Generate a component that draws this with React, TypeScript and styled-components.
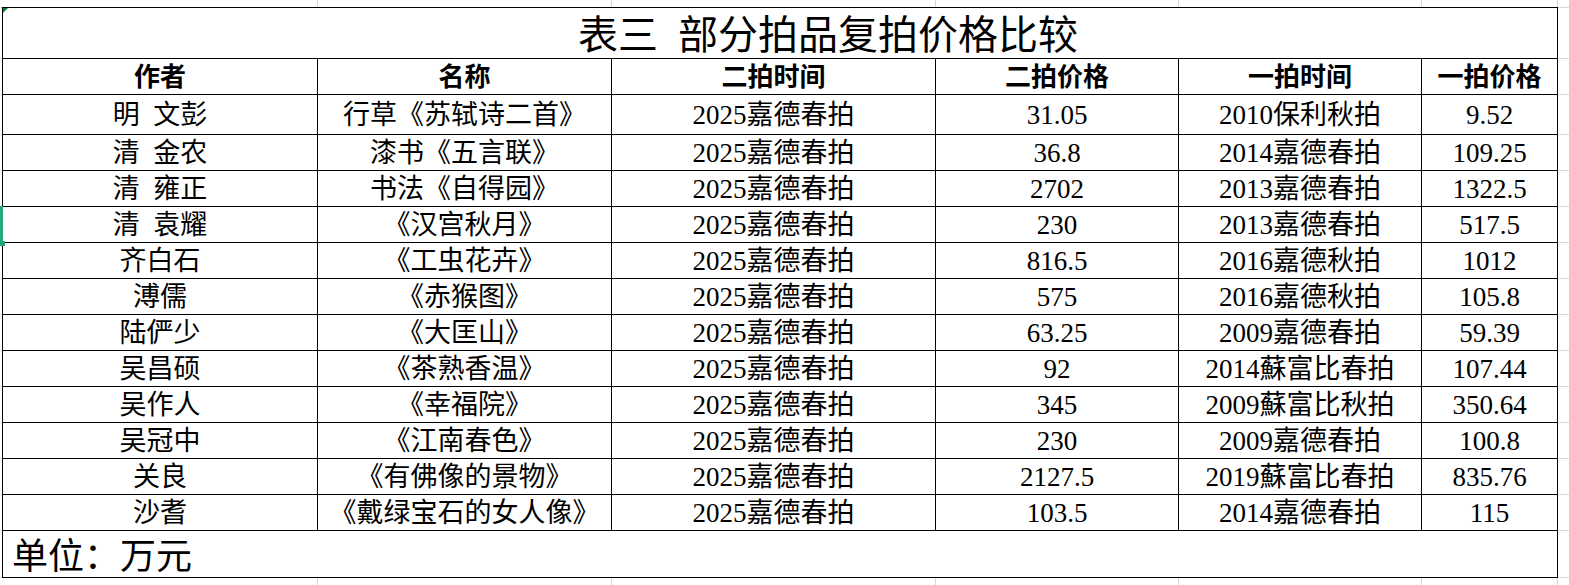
import React from "react";
import styled, { createGlobalStyle } from "styled-components";

const FONT = `"Liberation Serif", "Noto Sans CJK SC", serif`;
const GRID = "#d3d7e0";

// column tracks include the cell's right border
const COLS = [315, 294, 324, 243, 243, 136];
const COL_LINES = [317, 611, 935, 1178, 1421, 1557];
const ROW_LINES = [7, 58, 94, 134, 170, 206, 242, 278, 314, 350, 386, 422, 458, 494, 530, 577];

const lineStops = (pos: number[]) =>
  pos.map((p) => `transparent ${p}px, ${GRID} ${p}px, ${GRID} ${p + 1}px, transparent ${p + 1}px`).join(", ");

const GlobalStyle = createGlobalStyle`
  html, body {
    margin: 0;
    padding: 0;
    background-color: #fff;
  }
  body {
    font-family: ${FONT};
    color: #000;
    width: 1569px;
    height: 585px;
    overflow: hidden;
    background-image:
      linear-gradient(to right, ${lineStops(COL_LINES)}),
      linear-gradient(to bottom, ${lineStops(ROW_LINES)});
  }
`;

const Sheet = styled.div`
  position: relative;
  padding: 7px 0 0 2px;
`;

const Table = styled.div`
  display: grid;
  grid-template-columns: ${COLS.map((c) => `${c}px`).join(" ")};
  width: fit-content;
  border-left: 1px solid #000;
  border-top: 1px solid #000;
  background: #fff;
`;

const Cell = styled.div<{ $h: number; $bold?: boolean; $size?: number }>`
  box-sizing: border-box;
  height: ${(p) => p.$h}px;
  padding-top: 2px;
  border-right: 1px solid #000;
  border-bottom: 1px solid #000;
  display: flex;
  align-items: center;
  justify-content: center;
  font-size: ${(p) => p.$size ?? 27}px;
  font-weight: ${(p) => (p.$bold ? 700 : 400)};
  line-height: 1;
  white-space: pre;
`;

const TitleCell = styled(Cell)`
  grid-column: 1 / -1;
  position: relative;
  padding: 5px 0 0 96px;

  &::before {
    content: "";
    position: absolute;
    left: 0;
    top: 0;
    border-top: 5px solid #137a3a;
    border-right: 5px solid transparent;
  }
`;

const UnitCell = styled(Cell)`
  grid-column: 1 / -1;
  justify-content: flex-start;
  padding: 5px 0 0 9px;
`;

const Selection = styled.div`
  position: absolute;
  left: 0;
  top: 206px;
  width: 3px;
  height: 37px;
  background: #21a874;

  &::after {
    content: "";
    position: absolute;
    left: 0;
    bottom: -3px;
    width: 5px;
    height: 5px;
    background: #21a874;
  }
`;

const headers = ["作者", "名称", "二拍时间", "二拍价格", "一拍时间", "一拍价格"];

const rows: string[][] = [
  ["明  文彭", "行草《苏轼诗二首》", "2025嘉德春拍", "31.05", "2010保利秋拍", "9.52"],
  ["清  金农", "漆书《五言联》", "2025嘉德春拍", "36.8", "2014嘉德春拍", "109.25"],
  ["清  雍正", "书法《自得园》", "2025嘉德春拍", "2702", "2013嘉德春拍", "1322.5"],
  ["清  袁耀", "《汉宫秋月》", "2025嘉德春拍", "230", "2013嘉德春拍", "517.5"],
  ["齐白石", "《工虫花卉》", "2025嘉德春拍", "816.5", "2016嘉德秋拍", "1012"],
  ["溥儒", "《赤猴图》", "2025嘉德春拍", "575", "2016嘉德秋拍", "105.8"],
  ["陆俨少", "《大匡山》", "2025嘉德春拍", "63.25", "2009嘉德春拍", "59.39"],
  ["吴昌硕", "《茶熟香温》", "2025嘉德春拍", "92", "2014蘇富比春拍", "107.44"],
  ["吴作人", "《幸福院》", "2025嘉德春拍", "345", "2009蘇富比秋拍", "350.64"],
  ["吴冠中", "《江南春色》", "2025嘉德春拍", "230", "2009嘉德春拍", "100.8"],
  ["关良", "《有佛像的景物》", "2025嘉德春拍", "2127.5", "2019蘇富比春拍", "835.76"],
  ["沙耆", "《戴绿宝石的女人像》", "2025嘉德春拍", "103.5", "2014嘉德春拍", "115"],
];

export default function App() {
  return (
    <>
      <GlobalStyle />
      <Sheet>
        <Table>
          <TitleCell $h={51} $size={40}>
            表三  部分拍品复拍价格比较
          </TitleCell>
          {headers.map((h) => (
            <Cell key={h} $h={36} $bold $size={26}>
              {h}
            </Cell>
          ))}
          {rows.map((r, i) =>
            r.map((v, j) => (
              <Cell key={`${i}-${j}`} $h={i === 0 ? 40 : 36}>
                {v}
              </Cell>
            ))
          )}
          <UnitCell $h={47} $size={36}>
            单位：万元
          </UnitCell>
        </Table>
        <Selection />
      </Sheet>
    </>
  );
}
